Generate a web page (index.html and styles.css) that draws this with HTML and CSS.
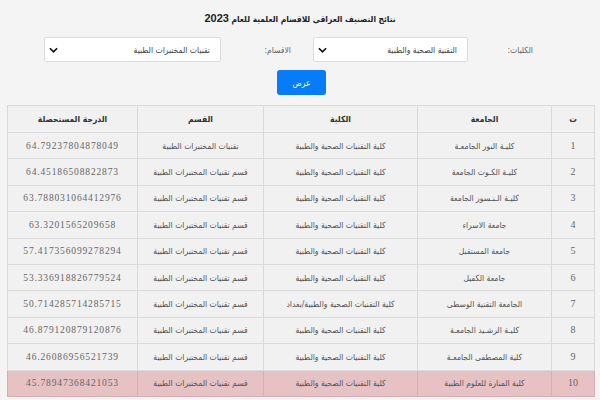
FILE: index.html
```html
<!DOCTYPE html>
<html lang="ar" dir="rtl">
<head>
<meta charset="utf-8">
<link rel="stylesheet" href="styles.css">
</head>
<body>
<h1 class="title">نتائج التصنيف العراقي للاقسام العلمية للعام <span class="yr">2023</span></h1>
<form class="filters">
  <label class="lbl lbl-college">الكليات:</label>
  <div class="sel sel-college">
    <select><option>التقنية الصحية والطبية</option></select>
    <svg class="chev" viewBox="0 0 10 6" width="9" height="6"><path d="M1 1 L5 5 L9 1" fill="none" stroke="#111" stroke-width="1.8"/></svg>
  </div>
  <label class="lbl lbl-dept">الاقسام:</label>
  <div class="sel sel-dept">
    <select><option>تقنيات المختبرات الطبية</option></select>
    <svg class="chev" viewBox="0 0 10 6" width="9" height="6"><path d="M1 1 L5 5 L9 1" fill="none" stroke="#111" stroke-width="1.8"/></svg>
  </div>
</form>
<div class="actions"><button class="btn" type="button">عرض</button></div>
<table class="results">
  <colgroup>
    <col class="c-n"><col class="c-uni"><col class="c-col"><col class="c-dep"><col class="c-score">
  </colgroup>
  <thead>
    <tr><th>ت</th><th>الجامعة</th><th>الكلية</th><th>القسم</th><th>الدرجة المستحصلة</th></tr>
  </thead>
  <tbody>
    <tr><td class="num">1</td><td>كليـة النور الجامعـة</td><td>كلية التقنيات الصحية والطبية</td><td>تقنيات المختبرات الطبية</td><td class="score">64.79237804878049</td></tr>
    <tr><td class="num">2</td><td>كليـة الكـوت الجامعة</td><td>كلية التقنيات الصحية والطبية</td><td>قسم تقنيات المختبرات الطبية</td><td class="score">64.45186508822873</td></tr>
    <tr><td class="num">3</td><td>كليـة الـنـسور الجامعة</td><td>كلية التقنيات الصحية والطبية</td><td>قسم تقنيات المختبرات الطبية</td><td class="score">63.788031064412976</td></tr>
    <tr><td class="num">4</td><td>جامعة الاسراء</td><td>كلية التقنيات الصحية والطبية</td><td>قسم تقنيات المختبرات الطبية</td><td class="score">63.3201565209658</td></tr>
    <tr><td class="num">5</td><td>جامعة المستقبل</td><td>كلية التقنيات الصحية والطبية</td><td>قسم تقنيات المختبرات الطبية</td><td class="score">57.417356099278294</td></tr>
    <tr><td class="num">6</td><td>جامعة الكفيل</td><td>كلية التقنيات الصحية والطبية</td><td>قسم تقنيات المختبرات الطبية</td><td class="score">53.336918826779524</td></tr>
    <tr><td class="num">7</td><td>الجامعة التقنية الوسطى</td><td>كلية التقنيات الصحية والطبية/بغداد</td><td>قسم تقنيات المختبرات الطبية</td><td class="score">50.714285714285715</td></tr>
    <tr><td class="num">8</td><td>كليـة الرشـيد الجامعـة</td><td>كلية التقنيات الصحية والطبية</td><td>قسم تقنيات المختبرات الطبية</td><td class="score">46.879120879120876</td></tr>
    <tr><td class="num">9</td><td>كلية المصطفى الجامعـة</td><td>كلية التقنيات الصحية والطبية</td><td>قسم تقنيات المختبرات الطبية</td><td class="score">46.26086956521739</td></tr>
    <tr class="hl"><td class="num">10</td><td>كلية المنارة للعلوم الطبية</td><td>كلية التقنيات الصحية والطبية</td><td>قسم تقنيات المختبرات الطبية</td><td class="score">45.78947368421053</td></tr>
  </tbody>
</table>
</body>
</html>
```
FILE: styles.css
```css
html, body {
  margin: 0;
  padding: 0;
  background: #f4f4f4;
}
body {
  font-family: "DejaVu Sans Condensed", "DejaVu Sans", sans-serif;
  color: #333;
  overflow: hidden;
}
.title {
  margin: 0;
  padding-top: 11px;
  height: 26px;
  font-size: 8.4px;
  font-weight: bold;
  text-align: center;
  color: #222;
  line-height: 14px;
}
.title .yr {
  font-family: "Liberation Sans", sans-serif;
  font-size: 11px;
}
.filters {
  display: flex;
  align-items: center;
  margin: 0;
  padding-right: 67px;
  height: 25px;
}
.lbl {
  font-size: 8.5px;
  color: #666;
  text-align: right;
  box-sizing: border-box;
}
.lbl-college { width: 65px; }
.lbl-dept { width: 92px; padding-right: 22px; }
.sel {
  position: relative;
  height: 25px;
}
.sel-college { width: 155px; }
.sel-dept { width: 177px; }
.sel select {
  appearance: none;
  -webkit-appearance: none;
  width: 100%;
  height: 25px;
  box-sizing: border-box;
  border: 1px solid #dcdcdc;
  border-radius: 2px;
  background: #fff;
  font-family: "DejaVu Sans Condensed", "DejaVu Sans", sans-serif;
  font-size: 8.5px;
  color: #444;
  padding: 0 10px 0 20px;
  direction: rtl;
}
.chev {
  position: absolute;
  left: 5px;
  top: 10px;
}
.actions {
  display: flex;
  justify-content: center;
  padding-top: 8px;
  padding-left: 3px;
}
.btn {
  width: 49px;
  height: 25px;
  border: none;
  border-radius: 3px;
  background: #087cf7;
  color: #fff;
  font-family: "DejaVu Sans Condensed", "DejaVu Sans", sans-serif;
  font-size: 8.5px;
  padding: 0;
}
.results {
  margin: 10px 5px 0 8px;
  width: 587px;
  border-collapse: collapse;
  table-layout: fixed;
  background: #f1f1f1;
  font-size: 8.5px;
}
.c-n { width: 43px; }
.c-uni { width: 134px; }
.c-col { width: 154px; }
.c-dep { width: 126px; }
.c-score { width: 130px; }
.results th, .results td {
  border: 1px solid #dadada;
  text-align: center;
  padding: 0 2px;
  white-space: nowrap;
  overflow: hidden;
  line-height: 12px;
}
.results th {
  height: 26px;
  font-weight: bold;
  color: #333;
}
.results td {
  height: 25.4px;
  color: #555;
}
.results td.num {
  font-family: "Liberation Serif", serif;
  font-size: 10px;
  color: #666;
}
.results td.score {
  font-family: "Liberation Serif", serif;
  font-size: 9.5px;
  letter-spacing: 0.85px;
  color: #666;
}
.results tr.hl td {
  background: #e6c2c4;
  border-color: #d4b0b2;
}
```
